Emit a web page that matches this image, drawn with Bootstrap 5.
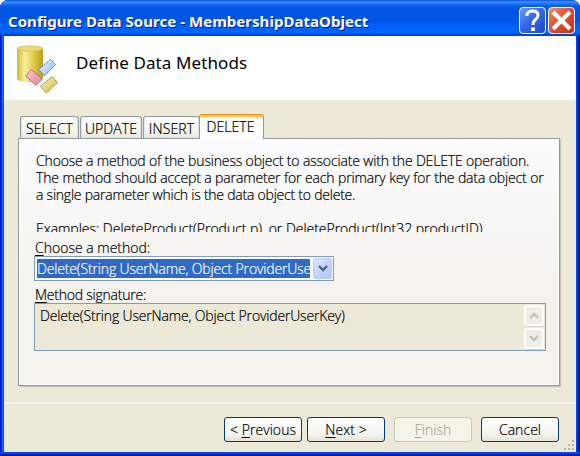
<!DOCTYPE html>
<html lang="en">
<head>
<meta charset="utf-8">
<title>Configure Data Source</title>
<link href="https://cdn.jsdelivr.net/npm/bootstrap@5.3.0/dist/css/bootstrap.min.css" rel="stylesheet">
<style>
html, body { height: 456px; overflow: hidden; background: #fff; }
body { font: 300 14px/17px "Open Sans", "Noto Sans", sans-serif; color: #000; }
u { text-underline-offset: 2px; text-decoration-thickness: 1px; }
.window { width: 580px; height: 456px; border-radius: 8px 8px 0 0; overflow: hidden; padding: 0 4px 4px;
  background: linear-gradient(90deg, #0019cf 0 1px, #0831d9 1px 2px, #166aee 2px 3px, #0855dd 3px 4px, #0855dd 4px 576px, #0048f1 576px 577px, #0030d0 577px 578px, #001ea0 578px 579px, #00138c 579px);
  position: relative; }
.window::after { content: ""; position: absolute; left: 0; right: 0; bottom: 0; height: 4px; background: linear-gradient(#0046e8 0 2px, #0024b8 2px 3px, #00138c 3px); }
.titlebar { height: 36px; margin: 0 -4px; padding: 3px 5px 0 8px;
  background: linear-gradient(#0a50d8 0, #3d95ff 2px, #2a80fb 3px, #0a5ce8 6px, #0054e3 10px, #0055e5 20px, #0260fa 27px, #0268ff 32px, #0050e0 34px, #003dc8 36px); }
.caption { font: bold 15px/20px "Noto Sans", sans-serif; color: #fff; text-shadow: 1px 1px 0 #0a1883; white-space: nowrap; letter-spacing: .04px; }
.capbtn { width: 27px; height: 27px; border: 1px solid #fff; border-radius: 4px; }
.help { background: linear-gradient(135deg, #6f9cf8, #3468e8 45%, #1c48cc); }
.close-x { background: linear-gradient(135deg, #ee9070, #e05030 45%, #c03412); }
.banner { height: 64px; background: #fff; padding: 9px 0 0 12px; }
.heading { font: 400 17px/24px "Noto Sans", sans-serif; letter-spacing: .1px; margin: 6px 0 0 14px; white-space: nowrap; }
.face { height: 352px; background: #ece9d8; -webkit-text-stroke: .2px; }
.tabs { padding: 14px 0 0 16px; height: 38px; }
.xtab { height: 22px; border: 1px solid #919b9c; border-bottom: 0; border-radius: 3px 3px 0 0; background: linear-gradient(#fff, #f2f2ea 75%, #e8e8df); text-align: center; line-height: 23px; white-space: nowrap; box-shadow: inset 1px 0 #dbe8f0, inset -1px 0 #dbe0e0; letter-spacing: .1px; }
.xtab.on { margin-bottom: -1px; background: #fdfdfe; border-top: 2px solid #ffc73c; box-shadow: 0 -1px 0 #e68b2c; height: 24px; line-height: 19px; padding-right: 2px; position: relative; }
.pane { margin: 0 16px 0 14px; height: 248px; border: 1px solid #919b9c; padding: 13px 12px 0 15px; background: linear-gradient(#fcfcfe, #f4f3ee 55%, #f4f3ee); box-shadow: inset -1px -1px #fff, inset 1px 0 #fff, 1px 1px 1px #c9c6b6; }
.desc { height: 80px; overflow: hidden; padding-left: 2px; white-space: nowrap; }
.lab { padding-left: 1px; height: 17px; white-space: nowrap; }
.combo { width: 300px; height: 25px; border: 1px solid #7f9db9; background: #fff; padding: 2px 1px 2px 2px; }
.picked { width: 273px; height: 19px; background: #316ac5; color: #fff; overflow: hidden; white-space: nowrap; line-height: 20px; }
.drop { width: 19px; height: 21px; margin-top: -1px; border: 1px solid #b6c9f8; border-radius: 2px; background: linear-gradient(135deg, #e0e9ff, #c0d0fc 60%, #b5c8f8); }
.sig { width: 512px; height: 48px; border: 1px solid #7f9db9; background: #ece9d8; padding: 0 1px 0 5px; }
.sbtn { width: 20px; height: 21px; margin-top: 1px; border: 2px solid #fff; border-radius: 3px; background: #efeee6; box-shadow: 0 1px #d8d5c5; }
.rule { height: 1px; background: #fff; margin-top: 16px; box-shadow: 0 -1px #e2dfcd; }
.actions { padding: 14px 17px 0 0; position: relative; height: 49px; }
.xbtn { width: 78px; height: 25px; padding: 0; border: 1px solid #003c74; border-radius: 3px; font-size: 14px; font-weight: 300; line-height: 23px; color: #000; white-space: nowrap; background: linear-gradient(#fff, #f4f4ef 70%, #e4e1d6); letter-spacing: .05px; }
.xbtn:disabled { color: #aca899; border-color: #c9c7ba; background: #f5f4ea; opacity: 1; }
.grip { position: absolute; right: 1px; bottom: 1px; }
.t0 { letter-spacing: -.03px; }
.t1 { letter-spacing: -.13px; }
.t2 { letter-spacing: -.16px; }
.t3 { letter-spacing: -.23px; }
</style>
</head>
<body>
<div class="window">
  <div class="titlebar d-flex justify-content-between">
    <div class="caption pt-2">Configure Data Source - MembershipDataObject</div>
    <div class="d-flex pt-1" style="gap:2px">
      <div class="capbtn help"><svg width="25" height="25" viewBox="0 0 25 25" fill="none" class="d-block"><path d="M7 8V6.500Q8 3 12.500 3Q18 3 18 7Q18 9.500 15.500 11.500Q13 13.500 13 17" stroke="#fff" stroke-width="3"/><path d="M11 19.500h4v3.500h-4z" fill="#fff"/></svg></div>
      <div class="capbtn close-x"><svg width="25" height="25" viewBox="0 0 25 25" class="d-block"><path d="M4 4L21 21M21 4L4 21" stroke="#fff" stroke-width="4.200"/></svg></div>
    </div>
  </div>
  <div class="banner d-flex">
    <svg width="46" height="50" viewBox="0 0 46 50">
      <defs><linearGradient id="cy"><stop stop-color="#cdb832"/><stop offset=".3" stop-color="#f8efa0"/><stop offset=".6" stop-color="#e2cf50"/><stop offset="1" stop-color="#b89f20"/></linearGradient>
      <linearGradient id="bl" x2="1" y2="1"><stop stop-color="#e8f2ff"/><stop offset="1" stop-color="#8fb8f4"/></linearGradient>
      <linearGradient id="pk" x2="1" y2="1"><stop stop-color="#fbc9cc"/><stop offset="1" stop-color="#e8849c"/></linearGradient>
      <linearGradient id="ye" x2="1" y2="1"><stop stop-color="#fbf5b8"/><stop offset="1" stop-color="#d0b93c"/></linearGradient></defs>
      <path d="M1 3.500V33Q1 37 14 37Q27 37 27 33V3.500Z" fill="url(#cy)"/>
      <ellipse cx="14" cy="3.500" rx="13" ry="2.500" fill="#e9dc76" stroke="#d0be55" stroke-width=".8"/>
      <path d="M22.500 24.500L34.500 14.500L39.500 19.500L28.500 31Z" fill="url(#bl)" stroke="#4b6fae" stroke-dasharray="1.500 .7"/>
      <path d="M15.500 24.500L26 34L20 40.500L9.500 31Z" fill="url(#pk)" stroke="#9d4c6c" stroke-dasharray="1.500 .7"/>
      <path d="M24.500 41.500L36 31.500L41.500 37.500L30.500 48Z" fill="url(#ye)" stroke="#857330" stroke-dasharray="1.500 .7"/>
    </svg>
    <div class="heading">Define Data Methods</div>
  </div>
  <div class="face">
    <div class="tabs d-flex align-items-end">
      <div class="xtab" style="width:59px">SELECT</div>
      <div class="xtab" style="width:62px;margin-left:1px">UPDATE</div>
      <div class="xtab" style="width:57px;margin-left:1px">INSERT</div>
      <div class="xtab on" style="width:65px;margin-left:-1px">DELETE</div>
    </div>
    <div class="pane">
      <div class="desc">
        <div class="t2">Choose a method of the business object to associate with the DELETE operation.</div>
        <div class="t1">The method should accept a parameter for each primary key for the data object or</div>
        <div class="t3">a single parameter which is the data object to delete.</div>
        <div>&nbsp;</div>
        <div class="t0">Examples: DeleteProduct(Product p), or DeleteProduct(Int32 productID)</div>
      </div>
      <div class="lab" style="margin-top:7px"><u>C</u>hoose a method:</div>
      <div class="combo d-flex justify-content-between">
        <div class="picked t2">Delete(String UserName, Object ProviderUserKey)</div>
        <div class="drop d-flex align-items-center justify-content-center"><svg width="10" height="7"><path d="M1 1L5 5L9 1" fill="none" stroke="#4d6185" stroke-width="2.300"/></svg></div>
      </div>
      <div class="lab t3" style="margin-top:5px"><u>M</u>ethod signature:</div>
      <div class="sig d-flex justify-content-between">
        <div class="t2" style="padding-top:3px">Delete(String UserName, Object ProviderUserKey)</div>
        <div>
          <div class="sbtn d-flex align-items-center justify-content-center"><svg width="10" height="7"><path d="M1 6L5 2L9 6" fill="none" stroke="#c5c3b6" stroke-width="2.300"/></svg></div>
          <div class="sbtn d-flex align-items-center justify-content-center" style="margin-top:2px"><svg width="10" height="7"><path d="M1 1L5 5L9 1" fill="none" stroke="#c5c3b6" stroke-width="2.300"/></svg></div>
        </div>
      </div>
    </div>
    <div class="rule"></div>
    <div class="actions d-flex justify-content-end align-items-start">
      <button class="btn xbtn">&lt; <u>P</u>revious</button>
      <button class="btn xbtn" style="margin-left:5px"><u>N</u>ext &gt;</button>
      <button class="btn xbtn" style="margin-left:9px" disabled><u>F</u>inish</button>
      <button class="btn xbtn" style="margin-left:9px">Cancel</button>
      <svg class="grip" width="12" height="12" fill="#b8b4a2"><path d="M9 1h2v2h-2zM5 5h2v2h-2zM9 5h2v2h-2zM1 9h2v2h-2zM5 9h2v2h-2zM9 9h2v2h-2z"/></svg>
    </div>
  </div>
</div>
<script src="https://cdn.jsdelivr.net/npm/bootstrap@5.3.0/dist/js/bootstrap.bundle.min.js"></script>
</body>
</html>
